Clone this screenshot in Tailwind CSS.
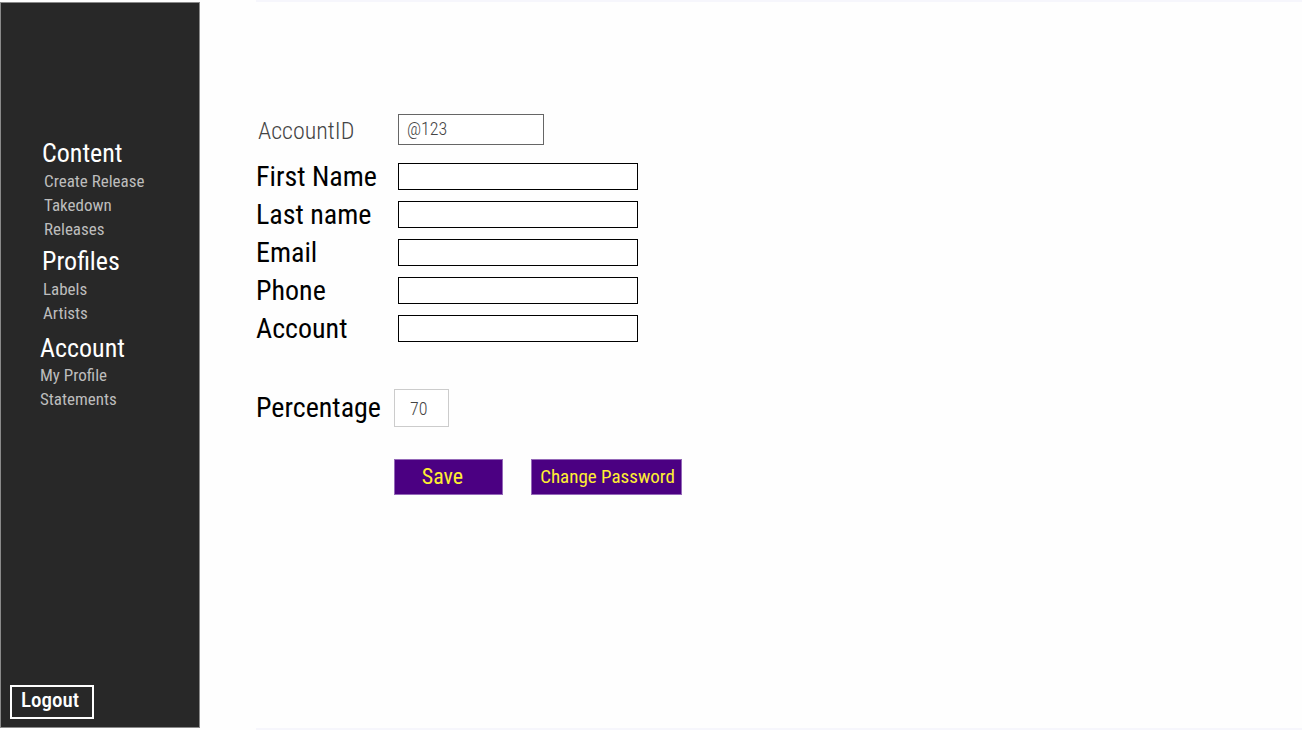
<!DOCTYPE html>
<html lang="en">
<head>
<meta charset="utf-8">
<meta name="viewport" content="width=device-width, initial-scale=1">
<title>My Profile</title>
<script src="https://cdn.jsdelivr.net/npm/@tailwindcss/browser@4"></script>
</head>
<body class="flex min-h-screen bg-[#fefefe] font-['Roboto_Condensed','Liberation_Sans_Narrow',sans-serif] text-black">
  <aside class="mt-[2px] mb-[2px] flex w-[200px] shrink-0 flex-col border border-[#8a8a8a] bg-[#282828] text-white">
    <nav class="mt-[134px] text-[17px] leading-6 text-[#bdbdbd]">
      <section class="pl-[41px]">
        <h2 class="text-[26px] leading-8 text-white">Content</h2>
        <ul class="pl-[2px]">
          <li><a href="#">Create Release</a></li>
          <li><a href="#">Takedown</a></li>
          <li><a href="#">Releases</a></li>
        </ul>
      </section>
      <section class="mt-1 pl-[41px]">
        <h2 class="text-[26px] leading-8 text-white">Profiles</h2>
        <ul class="pl-px">
          <li><a href="#">Labels</a></li>
          <li><a href="#">Artists</a></li>
        </ul>
      </section>
      <section class="mt-2 pl-[39px]">
        <h2 class="text-[26px] leading-[30px] text-white">Account</h2>
        <ul>
          <li><a href="#">My Profile</a></li>
          <li><a href="#">Statements</a></li>
        </ul>
      </section>
    </nav>
    <button type="button" class="mt-auto mb-2 ml-[9px] h-[34px] w-[84px] border-2 border-white pr-1 pb-1 text-[21px] leading-6 font-medium">Logout</button>
  </aside>

  <main class="ml-14 flex-1 border-y-2 border-[#f6f6fc]">
    <form class="pt-[112px] text-[28px] leading-[36px]">
      <div class="flex items-center">
        <label for="account-id" class="w-[142px] shrink-0 pt-[2px] pl-[2px] text-[24px] leading-7 font-light text-[#444]">AccountID</label>
        <input id="account-id" type="text" value="@123" readonly class="h-[31px] w-[146px] border border-[#666] bg-white px-2 pb-[2px] text-[18px] leading-6 font-light text-[#444]">
      </div>
      <div class="mt-3 flex items-center">
        <label for="first-name" class="w-[142px] shrink-0 pt-[2px]">First Name</label>
        <input id="first-name" type="text" class="h-[27px] w-[240px] border border-black bg-white px-2 text-[18px]">
      </div>
      <div class="flex items-center">
        <label for="last-name" class="w-[142px] shrink-0 pt-[2px]">Last name</label>
        <input id="last-name" type="text" class="h-[27px] w-[240px] border border-black bg-white px-2 text-[18px]">
      </div>
      <div class="flex items-center">
        <label for="email" class="w-[142px] shrink-0 pt-[2px]">Email</label>
        <input id="email" type="email" class="h-[27px] w-[240px] border border-black bg-white px-2 text-[18px]">
      </div>
      <div class="flex items-center">
        <label for="phone" class="w-[142px] shrink-0 pt-[2px]">Phone</label>
        <input id="phone" type="tel" class="h-[27px] w-[240px] border border-black bg-white px-2 text-[18px]">
      </div>
      <div class="flex items-center">
        <label for="account" class="w-[142px] shrink-0 pt-[2px]">Account</label>
        <input id="account" type="text" class="h-[27px] w-[240px] border border-black bg-white px-2 text-[18px]">
      </div>
      <div class="mt-[42px] flex items-center">
        <label for="percentage" class="w-[138px] shrink-0">Percentage</label>
        <input id="percentage" type="text" inputmode="numeric" value="70" class="h-[38px] w-[55px] border border-[#ccc] bg-white pl-[15px] text-[18px] font-light text-[#444]">
      </div>
      <div class="mt-8 ml-[138px] flex gap-7 text-[#ffee32]">
        <button type="submit" class="h-9 w-[109px] border border-[#9468b8] bg-[#4b0082] pr-3 text-[22px] leading-8">Save</button>
        <button type="button" class="h-9 w-[151px] border border-[#9468b8] bg-[#4b0082] pl-[2px] text-[19px] leading-8 whitespace-nowrap">Change Password</button>
      </div>
    </form>
  </main>
</body>
</html>
